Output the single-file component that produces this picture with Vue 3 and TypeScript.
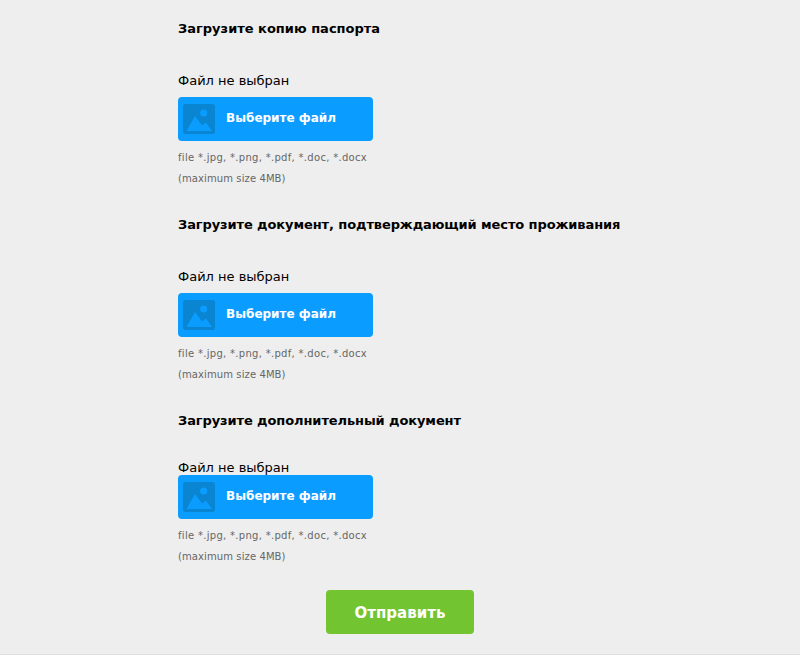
<script setup lang="ts">
interface Block { title: string; tight?: boolean }
const blocks: Block[] = [
  { title: 'Загрузите копию паспорта' },
  { title: 'Загрузите документ, подтверждающий место проживания' },
  { title: 'Загрузите дополнительный документ', tight: true },
]
</script>

<template>
  <main class="page">
    <div class="form">
      <section v-for="b in blocks" :key="b.title" class="block" :class="{ tight: b.tight }">
        <h3 class="title">{{ b.title }}</h3>
        <div class="status">Файл не выбран</div>
        <button type="button" class="pick">
          <span class="thumb">
            <svg width="32" height="30" viewBox="0 0 32 30">
              <rect width="32" height="30" rx="3" fill="#0a85d1" />
              <circle cx="20.7" cy="9" r="3.6" fill="#0a9dff" />
              <path d="M3.5 27 L12 12 L19 21.5 L23 18.5 L29 27 Z" fill="#0a9dff" />
            </svg>
          </span>
          <span class="pick-text">Выберите файл</span>
        </button>
        <p class="hint types">file *.jpg, *.png, *.pdf, *.doc, *.docx</p>
        <p class="hint size">(maximum size 4MB)</p>
      </section>
      <div class="actions">
        <button type="button" class="send">Отправить</button>
      </div>
    </div>
  </main>
</template>

<style scoped>
.page {
  height: 654px;
  background: #eeeeee;
  border-bottom: 1px solid #e0e0e0;
  font-family: "DejaVu Sans", Verdana, sans-serif;
  color: #000;
}
.form {
  width: 444px;
  margin-left: 178px;
  padding-top: 21px;
}
.block {
  height: 196px;
}
.block.tight {
  height: 177px;
}
.title {
  margin: 0;
  font-size: 13px;
  line-height: 16px;
  font-weight: 700;
  white-space: nowrap;
}
.block + .block .title {
  letter-spacing: -0.1px;
}
.status {
  margin-top: 36px;
  font-size: 13px;
  line-height: 16px;
}
.block.tight .status {
  margin-top: 31px;
}
.pick {
  display: flex;
  align-items: center;
  width: 195px;
  height: 44px;
  margin-top: 8px;
  padding: 0 0 0 5px;
  border: 0;
  border-radius: 4px;
  background: #0a9dff;
  color: #fff;
  font-family: inherit;
}
.block.tight .pick {
  margin-top: -1px;
}
.thumb {
  display: flex;
  width: 32px;
  height: 30px;
}
.pick-text {
  margin-left: 11px;
  padding-bottom: 3px;
  font-size: 12px;
  font-weight: 700;
}
.hint {
  margin: 0;
  font-size: 10px;
  line-height: 21px;
  color: #666;
  white-space: nowrap;
}
.types {
  letter-spacing: 0.3px;
}
.size {
  letter-spacing: 0.1px;
}
.pick + .hint {
  margin-top: 6px;
}
.actions {
  display: flex;
  justify-content: center;
  width: 444px;
}
.send {
  width: 148px;
  height: 44px;
  padding: 2px 0 0;
  border: 0;
  border-radius: 4px;
  background: #72c430;
  color: #fff;
  font-family: inherit;
  font-size: 15px;
  font-weight: 700;
}
</style>
